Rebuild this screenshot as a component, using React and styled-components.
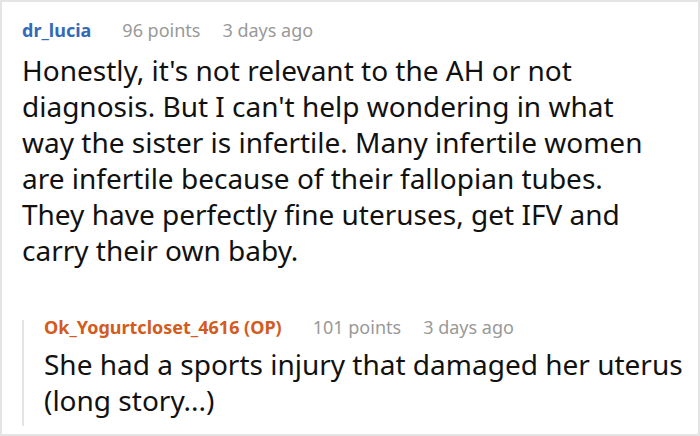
import React from "react";
import styled, { createGlobalStyle } from "styled-components";

const GlobalStyle = createGlobalStyle`
  html, body {
    margin: 0;
    padding: 0;
    background: #fff;
  }
  body {
    font-family: "Noto Sans", "Open Sans", sans-serif;
  }
`;

const Frame = styled.div`
  box-sizing: border-box;
  width: 700px;
  height: 436px;
  border: 2px solid #e4e4e4;
  background: #fff;
  padding: 21px 0 0 20px;
  overflow: hidden;
`;

const Comment = styled.div`
  display: flex;
  flex-direction: column;
  gap: ${({ gap }) => gap}px;
`;

const Meta = styled.div`
  display: flex;
  align-items: baseline;
  font-size: 18px;
  line-height: 14px;
  color: #999;
`;

const Author = styled.span`
  font-weight: 700;
  margin-right: 31px;
  color: ${({ op }) => (op ? "#d35b1e" : "#336ab8")};
`;

const Points = styled.span`
  margin-right: 22px;
`;

const Body = styled.p`
  margin: 0;
  font-size: 28px;
  line-height: 36px;
  color: #111;
  white-space: nowrap;
`;

const Reply = styled.div`
  margin-top: 52px;
  margin-right: 20px;
  border-left: 2px solid #e4e4e4;
  padding: 0 0 8px 20px;
`;

const Thread = ({ author, op, points, age, lines, gap }) => (
  <Comment gap={gap}>
    <Meta>
      <Author op={op}>{author}</Author>
      <Points>{points}</Points>
      <span>{age}</span>
    </Meta>
    <Body>
      {lines.map((line, i) => (
        <React.Fragment key={i}>
          {i > 0 && <br />}
          {line}
        </React.Fragment>
      ))}
    </Body>
  </Comment>
);

const mainLines = [
  "Honestly, it's not relevant to the AH or not",
  "diagnosis. But I can't help wondering in what",
  "way the sister is infertile. Many infertile women",
  "are infertile because of their fallopian tubes.",
  "They have perfectly fine uteruses, get IFV and",
  "carry their own baby.",
];

const replyLines = [
  "She had a sports injury that damaged her uterus",
  "(long story...)",
];

const App = () => {
  return (
    <>
      <GlobalStyle />
      <Frame>
        <Thread author="dr_lucia" points="96 points" age="3 days ago" lines={mainLines} gap={15} />
        <Reply>
          <Thread
            author="Ok_Yogurtcloset_4616 (OP)"
            op
            points="101 points"
            age="3 days ago"
            lines={replyLines}
            gap={12}
          />
        </Reply>
      </Frame>
    </>
  );
};

export default App;
